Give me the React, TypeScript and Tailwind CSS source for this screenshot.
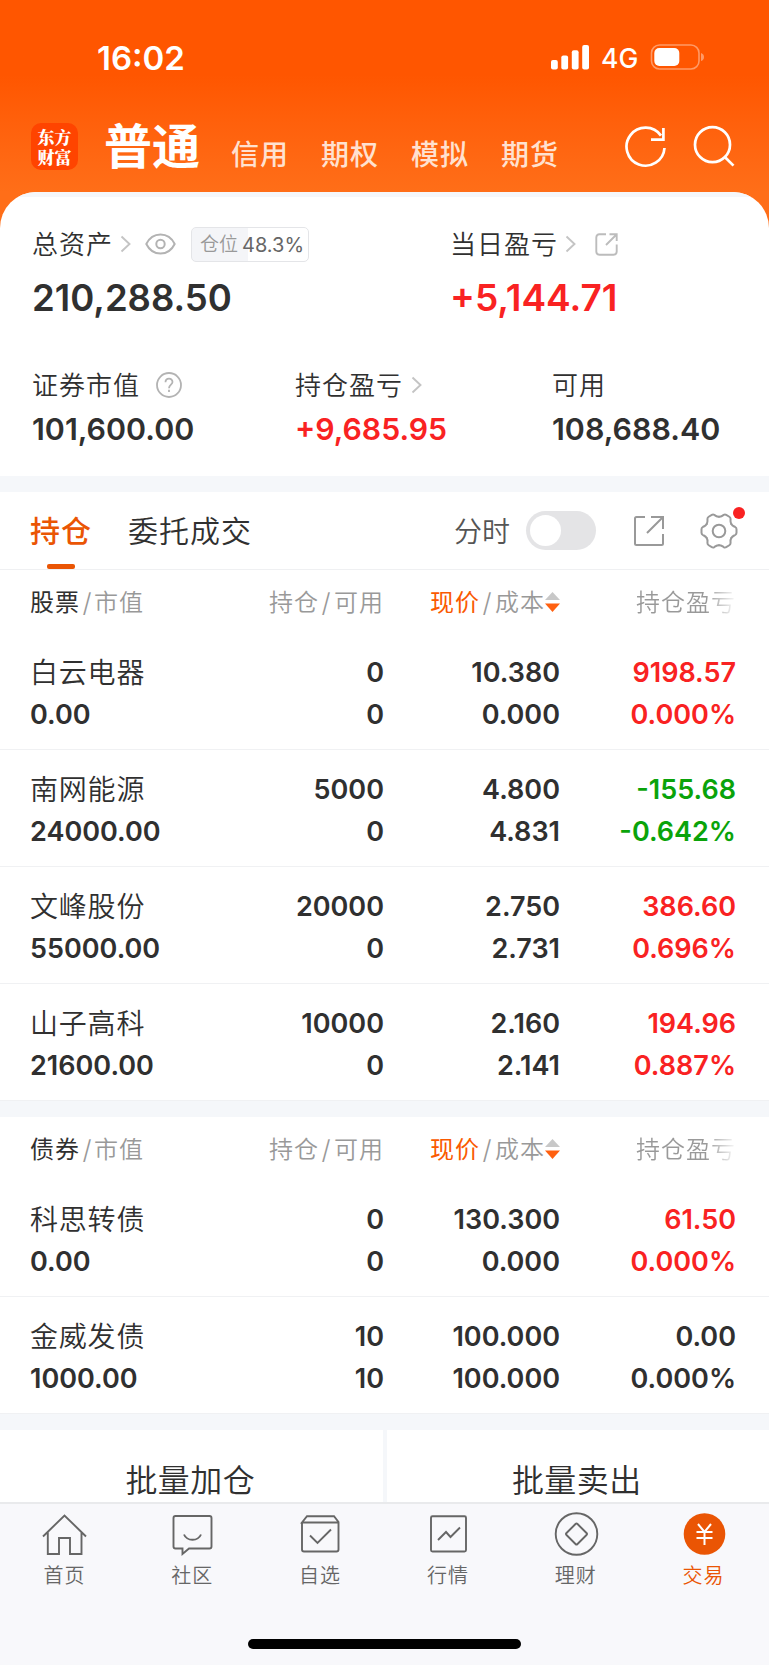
import React from "react";

type Tone = "up" | "down" | "flat";

interface Holding {
  name: string;
  value: string;
  amount: string;
  usable: string;
  price: string;
  cost: string;
  profit: string;
  rate: string;
  tone: Tone;
}

const stocks: Holding[] = [
  { name: "白云电器", value: "0.00", amount: "0", usable: "0", price: "10.380", cost: "0.000", profit: "9198.57", rate: "0.000%", tone: "up" },
  { name: "南网能源", value: "24000.00", amount: "5000", usable: "0", price: "4.800", cost: "4.831", profit: "-155.68", rate: "-0.642%", tone: "down" },
  { name: "文峰股份", value: "55000.00", amount: "20000", usable: "0", price: "2.750", cost: "2.731", profit: "386.60", rate: "0.696%", tone: "up" },
  { name: "山子高科", value: "21600.00", amount: "10000", usable: "0", price: "2.160", cost: "2.141", profit: "194.96", rate: "0.887%", tone: "up" },
];

const bonds: Holding[] = [
  { name: "科思转债", value: "0.00", amount: "0", usable: "0", price: "130.300", cost: "0.000", profit: "61.50", rate: "0.000%", tone: "up" },
  { name: "金威发债", value: "1000.00", amount: "10", usable: "10", price: "100.000", cost: "100.000", profit: "0.00", rate: "0.000%", tone: "flat" },
];

const toneClass: Record<Tone, string> = {
  up: "text-[#f92222]",
  down: "text-[#0aa30a]",
  flat: "text-[#303030]",
};

function Chevron({ className = "" }: { className?: string }) {
  return (
    <svg className={className} width="11" height="18" viewBox="0 0 11 18" fill="none" stroke="#c4c4c4" strokeWidth="1.9">
      <path d="M1.5 1.5L9.5 9L1.5 16.5" />
    </svg>
  );
}

function StatusBar() {
  return (
    <div className="flex h-[115px] items-start pl-[97px] pr-[65px] text-white">
      <div className="mt-[41px] text-[33px] font-semibold leading-[34px]">16:02</div>
      <svg className="ml-auto mt-[45px]" width="39" height="25" viewBox="0 0 39 25" fill="#fff">
        <rect x="0" y="15" width="6.8" height="9.4" rx="2" />
        <rect x="10.3" y="10.5" width="6.8" height="13.9" rx="2" />
        <rect x="20.8" y="5.2" width="6.8" height="19.2" rx="2" />
        <rect x="31.2" y="0" width="6.8" height="24.4" rx="2" />
      </svg>
      <div className="ml-[11px] mt-[45px] w-[49px] text-[26.5px] font-medium leading-[27px]">4G</div>
      <svg className="mt-[44px]" width="54" height="26" viewBox="0 0 54 26" fill="none">
        <rect x="1.5" y="1" width="47.5" height="24" rx="8" stroke="#ff9a66" strokeWidth="1.6" />
        <rect x="4.3" y="4" width="25" height="18" rx="5" fill="#fff" />
        <path d="M51 9Q54 10 54 13T51 17Z" fill="#ff9a66" />
      </svg>
    </div>
  );
}

function AccountTabs() {
  return (
    <div className="flex h-[77px] items-start pl-[31px]">
      <div className="mt-[8px] flex h-[47px] w-[47px] items-center justify-center rounded-[10px] bg-[#ff4400] font-['Noto_Serif_CJK_SC','Noto_Sans_CJK_SC',serif] text-[17px] font-black leading-[20px] text-white">
        <span className="w-[34px] break-all">东方财富</span>
      </div>
      <div className="ml-[26px] mt-[8px] w-[98px] text-[48px] font-bold leading-[48px] text-white">普通</div>
      <div className="ml-[29px] mt-[25px] flex text-[28px] font-medium leading-[30px] tracking-[1px] text-[#ffe1d0]">
        {["信用", "期权", "模拟", "期货"].map((tab) => (
          <span key={tab} className="w-[90px]">{tab}</span>
        ))}
      </div>
      <svg className="ml-[34px] mt-[11px]" width="42" height="42" viewBox="0 0 42 42" fill="none" stroke="#fff" strokeWidth="2.7">
        <path d="M39.500 22A19 19 0 1 1 36 9.600" />
        <path d="M38.400 2V13.600H26" />
      </svg>
      <svg className="ml-[26px] mt-[10px]" width="42" height="42" viewBox="0 0 42 42" fill="none" stroke="#fff" strokeWidth="2.7">
        <circle cx="19.5" cy="19.7" r="17.5" />
        <path d="M31.8 32L40.5 40.6" />
      </svg>
    </div>
  );
}

function Summary() {
  return (
    <div className="h-[284px] overflow-hidden rounded-t-[36px] bg-white text-[#303030]">
      <div className="h-[5px] bg-[#f5f7fa]" />
      <div className="grid grid-cols-[418px_1fr] pl-[32px] pt-[29px]">
        <div>
          <div className="flex h-[36px] items-center">
            <span className="text-[26px] font-[350] leading-[36px] tracking-[1px] pt-[2px]">总资产</span>
            <Chevron className="ml-[7px]" />
            <svg className="ml-[14px]" width="31" height="22" viewBox="0 0 31 22" fill="none" stroke="#b3b3b3" strokeWidth="2">
              <path d="M1.300 11C4.500 4.500 9.500 1.500 15.500 1.500S26.500 4.500 29.700 11C26.500 17.500 21.500 20.500 15.500 20.500S4.500 17.500 1.300 11Z" strokeLinejoin="round" />
              <circle cx="15.500" cy="11" r="4.200" />
            </svg>
            <div className="ml-[15px] flex h-[35px] w-[118px] items-center rounded-[5px] border border-[#e4e5e8] bg-linear-to-r from-[#f4f5f8] from-48% to-white to-48% pl-[8px] pt-[2px] text-[19px]">
              <span className="w-[42px] font-[350] text-[#999]">仓位</span>
              <span className="text-[20px] text-[#666]">48.3%</span>
            </div>
          </div>
          <div className="mt-[14px] text-[36.5px] font-semibold leading-[44px]">210,288.50</div>
        </div>
        <div>
          <div className="flex h-[36px] items-center">
            <span className="text-[26px] font-[350] leading-[36px] tracking-[1px] pt-[2px]">当日盈亏</span>
            <Chevron className="ml-[7px]" />
            <svg className="ml-[19px]" width="23" height="23" viewBox="0 0 23 23" fill="none" stroke="#bcbcbc" strokeWidth="1.9">
              <path d="M11 1.300H4.500Q1.300 1.300 1.300 4.500V18.500Q1.300 21.700 4.500 21.700H18.500Q21.700 21.700 21.700 18.500V11.500" />
              <path d="M14.500 1.300H21.700V8M21.500 1.500L11 12" />
            </svg>
          </div>
          <div className="mt-[14px] text-[37px] font-semibold leading-[44px] text-[#f92222]">+5,144.71</div>
        </div>
      </div>
      <div className="grid grid-cols-[263px_257px_1fr] pl-[32px] pt-[47px]">
        <div>
          <div className="flex h-[36px] items-center text-[26px] font-[350] tracking-[1px]">
            证券市值
            <svg className="ml-[16px]" width="26" height="26" viewBox="0 0 26 26" fill="none" stroke="#b3b3b3" strokeWidth="1.800">
              <circle cx="13" cy="13" r="12" />
              <path d="M9.500 10.200C9.500 5.500 16.500 5.500 16.500 10C16.500 12.600 13 12.700 13 16.200M13 17.700V20" />
            </svg>
          </div>
          <div className="mt-[7px] text-[30.4px] font-semibold leading-[38px]">101,600.00</div>
        </div>
        <div>
          <div className="flex h-[36px] items-center text-[26px] font-[350] tracking-[1px]">
            持仓盈亏
            <Chevron className="ml-[8px]" />
          </div>
          <div className="mt-[7px] text-[30.2px] font-semibold leading-[38px] text-[#f92222]">+9,685.95</div>
        </div>
        <div>
          <div className="flex h-[36px] items-center text-[26px] font-[350] tracking-[1px]">可用</div>
          <div className="mt-[7px] text-[30.4px] font-semibold leading-[38px]">108,688.40</div>
        </div>
      </div>
    </div>
  );
}

function GearIcon() {
  return (
    <svg width="38" height="38" viewBox="-19 -19 38 38" fill="none" stroke="#999" strokeWidth="2" strokeLinecap="round">
      {[0, 60, 120, 180, 240, 300].map((angle) => (
        <path
          key={angle}
          transform={`rotate(${angle})`}
          d="M12.300 -7.100C13.500 -5 14.600 -4.900 16.200 -4Q17.500 -3.200 17.500 -1.800V1.800Q17.500 3.200 16.200 4C14.600 4.900 13.500 5 12.300 7.100"
        />
      ))}
      <circle r="6.300" />
    </svg>
  );
}

function PositionTabs() {
  return (
    <div className="flex h-[78px] border-b border-[#eff0f2] pl-[30px] pr-[31px]">
      <div className="flex w-[62px] flex-col items-center">
        <div className="mt-[19px] text-[30px] font-medium leading-[40px] tracking-[1px] text-[#ea5504]">持仓</div>
        <div className="mt-auto h-[5px] w-[28px] rounded-[2px] bg-[#ea5504]" />
      </div>
      <div className="ml-[36px] mt-[19px] text-[30px] font-[350] leading-[40px] tracking-[1px] text-[#303030]">委托成交</div>
      <div className="ml-auto mt-[20px] text-[28px] font-[350] leading-[40px] text-[#555]">分时</div>
      <div className="ml-[16px] mt-[19px] h-[39px] w-[70px] rounded-full bg-[#e4e4e6] p-[4px]">
        <div className="h-[31px] w-[31px] rounded-full bg-white" />
      </div>
      <svg className="ml-[37px] mt-[23px]" width="32" height="32" viewBox="0 0 32 32" fill="none" stroke="#999" strokeWidth="2">
        <path d="M12 2H3.500Q2 2 2 3.500V28.500Q2 30 3.500 30H28.500Q30 30 30 28.500V19" />
        <path d="M18 2H30V14M29.800 2.200L14 18" />
      </svg>
      <div className="relative ml-[35px] mt-[20px]">
        <GearIcon />
        <div className="absolute -top-[5px] left-[33px] h-[12px] w-[12px] rounded-full bg-[#f92222]" />
      </div>
    </div>
  );
}

function Slash() {
  return <span className="w-[15px] text-center text-[26px] font-light leading-[24px]">/</span>;
}

function TableHead({ label }: { label: string }) {
  return (
    <div className="grid h-[63px] grid-cols-[178px_176px_176px_176px] items-center pl-[30px] pt-[2px] text-[24px] font-[350] tracking-[1px] text-[#999]">
      <div className="flex items-center">
        <span className="font-normal text-[#303030]">{label}</span>
        <Slash />
        <span className="-ml-px">市值</span>
      </div>
      <div className="flex items-center justify-end">
        <span>持仓</span>
        <Slash />
        <span>可用</span>
      </div>
      <div className="flex items-center justify-end">
        <span className="font-normal text-[#fa5a00]">现价</span>
        <Slash />
        <span>成本</span>
        <svg className="-mt-[2px]" width="15" height="20" viewBox="0 0 15 20">
          <path d="M7.500 0L15 8H0Z" fill="#c8c8c8" />
          <path d="M0 11.500H15L7.500 20Z" fill="#ff6010" />
        </svg>
      </div>
      <div className="justify-self-end bg-linear-to-r from-[#999] from-70% to-[#999]/5 bg-clip-text text-transparent">持仓盈亏</div>
    </div>
  );
}

function HoldingRow({ item }: { item: Holding }) {
  return (
    <div className="grid h-[117px] grid-cols-[178px_176px_176px_176px] border-b border-[#f0f1f3] pl-[30px] pt-[19px] text-[27px] font-semibold leading-[42px] text-[#303030]">
      <div>
        <div className="text-[28px] font-[350] tracking-[0.8px]">{item.name}</div>
        <div>{item.value}</div>
      </div>
      <div className="text-right">
        <div>{item.amount}</div>
        <div>{item.usable}</div>
      </div>
      <div className="text-right">
        <div>{item.price}</div>
        <div>{item.cost}</div>
      </div>
      <div className={`text-right ${toneClass[item.tone]}`}>
        <div>{item.profit}</div>
        <div>{item.rate}</div>
      </div>
    </div>
  );
}

const navItems = [
  {
    label: "首页",
    icon: <path d="M1 23.500L22.500 2.500L44 23.500M5.800 19.500V41H17V25H28V41H39.500V19.500" />,
  },
  {
    label: "社区",
    icon: (
      <>
        <path d="M5.500 3H39.500Q41.500 3 41.500 5V33.500Q41.500 35.500 39.500 35.500H19L12.500 41V35.500H5.500Q3.500 35.500 3.500 33.500V5Q3.500 3 5.500 3Z" />
        <path d="M14 21.500C17 28.500 28 28.500 31 21.500" />
      </>
    ),
  },
  {
    label: "自选",
    icon: (
      <>
        <path d="M4 10V36.500Q4 38.500 6 38.500H38.500Q40.500 38.500 40.500 36.500V9L36 3.200H9L4 9.500H40.500" />
        <path d="M12 22.500L19.500 30L33 16.500" />
      </>
    ),
  },
  {
    label: "行情",
    icon: (
      <>
        <rect x="5" y="3.200" width="35" height="35.300" rx="1.500" />
        <path d="M12 27L20 19L24.500 24L34 14.500" />
      </>
    ),
  },
  {
    label: "理财",
    icon: (
      <>
        <circle cx="22.500" cy="21" r="20.800" />
        <path d="M21.500 11Q22.500 10 23.500 11L32.500 20Q33.500 21 32.500 22L23.500 31Q22.500 32 21.500 31L12.500 22Q11.500 21 12.500 20Z" />
      </>
    ),
  },
  {
    label: "交易",
    icon: (
      <>
        <circle cx="22.500" cy="21" r="20.800" fill="#ea5504" stroke="none" />
        <path d="M16 11L22.500 19L29 11M22.500 19V32M14.500 19H30.500M14.500 25H30.500" stroke="#fff" strokeWidth="2" />
      </>
    ),
  },
];

function BottomNav() {
  return (
    <div className="flex h-[163px] flex-col border-t-2 border-[#e9eaec] bg-[#f8f8fb]">
      <div className="grid w-[768px] grid-cols-6 pl-px pt-[9px]">
        {navItems.map((item) => (
          <div key={item.label} className="flex flex-col items-center">
            <svg className="overflow-visible" width="45" height="43" viewBox="0 0 45 43" fill="none" stroke="#666" strokeWidth="1.900">
              {item.icon}
            </svg>
            <span
              className={`-ml-px mt-[6px] text-[20px] font-[350] leading-[28px] tracking-[1px] ${item.label === "交易" ? "text-[#ea5504]" : "text-[#666]"}`}
            >
              {item.label}
            </span>
          </div>
        ))}
      </div>
      <div className="mb-[16px] mt-auto h-[10px] w-[273px] self-center rounded-full bg-black" />
    </div>
  );
}

export default function App() {
  return (
    <div className="w-[769px] bg-white font-['Inter','Noto_Sans_CJK_SC',sans-serif]">
      <div className="bg-linear-to-b from-[#ff5600] from-[75px] to-[#ff6e18] to-[192px]">
        <StatusBar />
        <AccountTabs />
        <Summary />
      </div>
      <div className="h-[16px] bg-[#f5f7fa]" />
      <PositionTabs />
      <TableHead label="股票" />
      {stocks.map((item) => (
        <HoldingRow key={item.name} item={item} />
      ))}
      <div className="h-[16px] bg-[#f5f7fa]" />
      <TableHead label="债券" />
      {bonds.map((item) => (
        <HoldingRow key={item.name} item={item} />
      ))}
      <div className="h-[16px] bg-[#f5f7fa]" />
      <div className="grid h-[72px] grid-cols-2 gap-[4px] bg-[#f5f7fa] text-[32px] font-[350] leading-[101px] tracking-[0.4px] text-[#303030]">
        <div className="overflow-hidden bg-white pr-[2px] text-center">批量加仓</div>
        <div className="overflow-hidden bg-white pr-[2px] text-center">批量卖出</div>
      </div>
      <BottomNav />
    </div>
  );
}
